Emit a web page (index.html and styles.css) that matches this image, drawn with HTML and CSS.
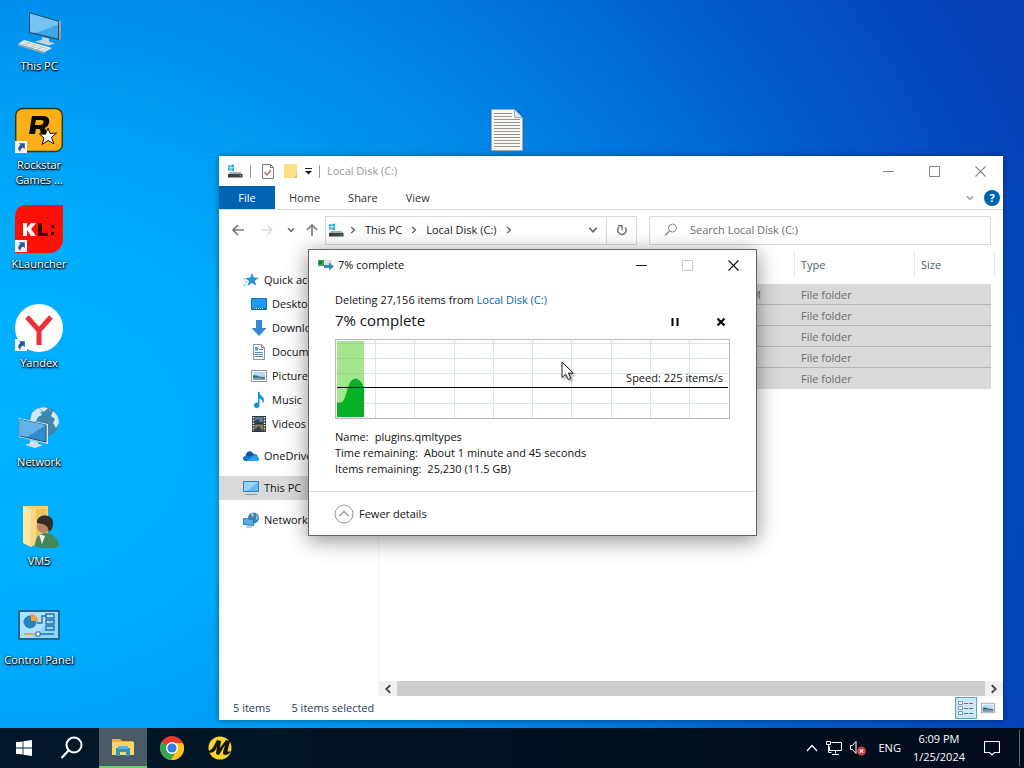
FILE: index.html
```html
<!DOCTYPE html>
<html lang="en">
<head>
  <meta charset="UTF-8" />
  <meta name="viewport" content="width=device-width, initial-scale=1" />
  <title>Local Disk (C:)</title>
  <link rel="stylesheet" href="styles.css">
</head>
<body>
  <!-- shared icons -->
  <svg class="sprite" aria-hidden="true">
    <symbol id="chevron" viewBox="0 0 8 8"><path d="M1 2.2 4 5.4 7 2.2" fill="none" stroke="currentColor" stroke-width="1.4"/></symbol>
    <symbol id="min" viewBox="0 0 11 11"><path d="M0 5.5h11" stroke="currentColor"/></symbol>
    <symbol id="max" viewBox="0 0 11 11"><path d="M.5.5h10v10H.5z" fill="none" stroke="currentColor"/></symbol>
    <symbol id="close" viewBox="0 0 11 11"><path d="M.5.5l10 10M10.5.5l-10 10" stroke="currentColor" stroke-width="1.1"/></symbol>
    <symbol id="disk" viewBox="0 0 16 14">
      <path d="M1 1.6 3.5 1v2.5H1zM4.3.9 7 .4v3.1H4.3zM1 4.3h2.5v2.4L1 6.2zM4.3 4.3H7v3.1l-2.7-.6z" fill="#1ba9e8"/>
      <path d="M3 8h10.5l2 2.500H1z" fill="#a9adb0"/>
      <path d="M1 10h14.500v3.500H1z" fill="#3c4246"/>
      <path d="M12.500 11.300h1.500v1h-1.500z" fill="#35e05f"/>
    </symbol>
    <symbol id="shortcut" viewBox="0 0 12 12">
      <path d="M0 0h12v12H0z" fill="#f3f6fa"/>
      <path d="M3.800 2.200h6v6L8 6.500C6 7.500 5.200 9 5.300 11 2.200 8.800 2.800 5.500 5.700 4.100z" fill="#2c5798"/>
    </symbol>
    <symbol id="picture" viewBox="0 0 16 12">
      <path d="M.5.5h15v11H.5z" fill="#fff" stroke="#8d9499"/>
      <path d="M2 2h12v8H2z" fill="#b5dcf4"/>
      <path d="M2 5.500c4-1 6 2 12 1.500V10H2z" fill="#3c6683"/>
      <path d="M2 8c5-1 8 0 12 .5V10H2z" fill="#79a1b1"/>
    </symbol>
  </svg>

  <main class="desktop">
    <nav class="shortcuts" aria-label="Desktop">
      <a href="#" class="shortcut">
        <svg viewBox="0 0 48 48">
          <path d="M14 5l30 9v19l-30-7z" fill="#33475a"/>
          <path d="M15 6.500l28 8.300v16.700l-28-6.500z" fill="#3fa6ea"/>
          <path d="M15 6.500l28 8.300v3L20 26l-5-1z" fill="#74c3f3"/>
          <path d="M44 14l2-.5v18.500l-2 1z" fill="#8fa2ae"/>
          <path d="M27 30l7 1.500v3l6 2-6 2-14-4 7-2z" fill="#c3d2db"/>
          <path d="M9 33l28 8-7 4L3 37z" fill="#eef3f5"/>
          <path d="M3 37l27 8v2L3 38.500z" fill="#9aaab4"/>
          <path d="M8 35l26 7M6 36.500l26 7M15 35l-6 3.500M21 37l-5 4M28 39l-6 4" stroke="#a8b6bf" stroke-width=".7"/>
        </svg>
        <span>This PC</span>
      </a>
      <a href="#" class="shortcut">
        <svg viewBox="0 0 48 48">
          <rect x=".7" y="2.500" width="46.600" height="43" rx="7" fill="#fcaf17" stroke="#2b3a15" stroke-width="1.400"/>
          <path d="M17 10h11c5 0 7 3 6 7-.7 3-2.500 4.500-5 5 2 .8 2.400 2 2 6h-5.500c0-4 .3-5-2.500-5h-2l-1.200 5H14zM21 14l-1.200 5H25c2 0 3-.8 3.400-2.500S28 14 26 14z" fill="#0c0a05"/>
          <path d="M33 22l2 5.500 6.500-.5-5 4.500 2.500 6.500-6-3.500-6 4 2-6.500-4.500-4 6 .2z" fill="#fff" stroke="#17130a"/>
          <use href="#shortcut" x="0" y="35" width="12" height="12"/>
        </svg>
        <span>Rockstar Games ...</span>
      </a>
      <a href="#" class="shortcut">
        <svg viewBox="0 0 48 48">
          <path d="M10 0h38v34c0 8-6 14-14 14H0V13C0 5 4 0 10 0z" fill="#ff1005"/>
          <path d="M8 18h4v5l4-5h5l-5 6 5 7h-5l-4-6v6H8z" fill="#fff"/>
          <path d="M23 18h4v10h6v3H23zM36 20h3v3h-3zM36 27h3v3h-3z" fill="#350706"/>
          <use href="#shortcut" x="0" y="35" width="12" height="12"/>
        </svg>
        <span>KLauncher</span>
      </a>
      <a href="#" class="shortcut">
        <svg viewBox="0 0 48 48">
          <circle cx="24" cy="24" r="24" fill="#fff"/>
          <path d="M12 13l12 13.500L36 13M24 26v15" fill="none" stroke="#ee3036" stroke-width="5"/>
          <use href="#shortcut" x="0" y="35" width="12" height="12"/>
        </svg>
        <span>Yandex</span>
      </a>
      <a href="#" class="shortcut">
        <svg viewBox="0 0 48 48">
          <circle cx="29" cy="19" r="15" fill="#3f86af"/>
          <path d="M17 10c4-5 10-7 16-5l-3 3-4 1 1 3-4 2-2 4-6 1c0-3 1-6 2-9zM38 8c4 3 6 7 6 12l-3 5-3-5 2-4-4-3z" fill="#cfe8f2"/>
          <path d="M24 5l3 3-2 3M34 6l2 3" stroke="#7db4cf" fill="none"/>
          <path d="M4 15l29 6v20L4 34z" fill="#d6e4ec"/>
          <path d="M5 16.500l26 5.500v17L5 33z" fill="#318bd0" stroke="#244e71"/>
          <path d="M5 16.500l26 5.500L12 34l-7-1.500z" fill="#63b3e8"/>
          <path d="M15 37l8 2v2l5 1-8 3-10-3 5-2z" fill="#d1dfe7"/>
        </svg>
        <span>Network</span>
      </a>
      <a href="#" class="shortcut">
        <svg viewBox="0 0 48 48">
          <path d="M8 4h25v37H8z" fill="#f4d271"/>
          <path d="M8 4l8 3v38l-8-4z" fill="#ffe9a1"/>
          <path d="M16 7h15v31l-15 7z" fill="#eac365"/>
          <path d="M16 7l-1 38 6-4V7z" fill="#f7d985"/>
          <path d="M20 44c0-10 5-13 11-13s12 5 13 13l-4 2H24z" fill="#46865c"/>
          <path d="M24 32l3 10 3-8z" fill="#eaf1ed"/>
          <circle cx="29" cy="24" r="7" fill="#b98460"/>
          <path d="M22 19c1-7 15-8 16 1 .5 5-2 9-4 10-1-6-3-8-12-9z" fill="#352e2b"/>
        </svg>
        <span>VM5</span>
      </a>
      <a href="#" class="shortcut">
        <svg viewBox="0 0 48 48">
          <path d="M3 9h42v30H3z" fill="#246794"/>
          <path d="M5 11h38v26H5z" fill="#8fd4fa"/>
          <path d="M5 11h38L17 37H5z" fill="#ade1fc"/>
          <circle cx="15" cy="21" r="6.500" fill="#2583bf"/>
          <path d="M16 20v-7c4 0 7 3 7 7z" fill="#f89e36"/>
          <path d="M22 22h5v-7h4M31 13h8v4h-8zM31 19h8v4h-8zM31 25h8v4h-8z" fill="none" stroke="#2373a5" stroke-width="1.400"/>
          <path d="M9 33h13" stroke="#d69844" stroke-width="1.500"/>
          <path d="M24 33h15" stroke="#2373a5" stroke-width="1.500"/>
          <path d="M21 31h4v4h-4z" fill="#fff" stroke="#2373a5"/>
        </svg>
        <span>Control Panel</span>
      </a>
    </nav>

    <svg class="text-file" viewBox="0 0 32 42" aria-label="Text document">
      <path d="M.5.500h23l8 8v33H.500z" fill="#f7f7f5" stroke="#a6a8a7"/>
      <path d="M23.500.500v8h8z" fill="#dfe4e8" stroke="#a6a8a7"/>
      <path d="M3 4.500h18M3 7.500h18M3 10.500h26M3 13.500h26M3 16.500h26M3 19.500h26M3 22.500h26M3 25.500h26M3 28.500h26M3 31.500h26M3 34.500h26M3 37.500h26" stroke="#9a928c"/>
    </svg>

    <section class="explorer" aria-label="Local Disk (C:)">
      <header class="titlebar">
        <svg class="disk" viewBox="0 0 16 14"><use href="#disk"/></svg>
        <i class="sep"></i>
        <svg class="props" viewBox="0 0 12 15">
          <path d="M.5.500h8l3 3v11H.500z" fill="#fff" stroke="#7a7a7a"/>
          <path d="M8.500.500v3h3" fill="none" stroke="#7a7a7a"/>
          <path d="M2.500 8l2.500 3 4-5" fill="none" stroke="#b4694c" stroke-width="1.400"/>
        </svg>
        <svg class="newfolder" viewBox="0 0 13 16">
          <path d="M0 1h13v14H0z" fill="#fbdf86"/><path d="M10 15l3-4v4z" fill="#e5bd53"/>
        </svg>
        <svg class="menu-arrow" viewBox="0 0 7 7"><path d="M0 .5h7" stroke="#222"/><path d="M0 3h7L3.500 6.500z" fill="#111"/></svg>
        <i class="sep"></i>
        <h1>Local Disk (C:)</h1>
        <div class="window-buttons">
          <button type="button" aria-label="Minimize"><svg><use href="#min"/></svg></button>
          <button type="button" aria-label="Maximize"><svg><use href="#max"/></svg></button>
          <button type="button" aria-label="Close"><svg><use href="#close"/></svg></button>
        </div>
      </header>

      <div class="ribbon">
        <button type="button" class="file-tab">File</button>
        <button type="button">Home</button>
        <button type="button">Share</button>
        <button type="button">View</button>
        <button type="button" class="expand" aria-label="Expand the ribbon"><svg><use href="#chevron"/></svg></button>
        <button type="button" class="help" aria-label="Help">?</button>
      </div>

      <div class="toolbar">
        <div class="arrows">
          <button type="button" aria-label="Back"><svg viewBox="0 0 12 12"><path d="M12 6H1M6 1 1 6l5 5" fill="none" stroke="#777" stroke-width="1.600"/></svg></button>
          <button type="button" aria-label="Forward"><svg viewBox="0 0 12 12"><path d="M0 6h11M6 1l5 5-5 5" fill="none" stroke="#ddd" stroke-width="1.400"/></svg></button>
          <button type="button" class="recent" aria-label="Recent locations"><svg><use href="#chevron"/></svg></button>
          <button type="button" class="up" aria-label="Up"><svg viewBox="0 0 12 12"><path d="M6 12V1M1 6l5-5 5 5" fill="none" stroke="#777" stroke-width="1.600"/></svg></button>
        </div>
        <div class="address">
          <svg class="disk" viewBox="0 0 16 14"><use href="#disk"/></svg>
          <svg class="crumb"><use href="#chevron"/></svg>
          <a href="#">This PC</a>
          <svg class="crumb"><use href="#chevron"/></svg>
          <a href="#">Local Disk (C:)</a>
          <svg class="crumb"><use href="#chevron"/></svg>
          <button type="button" class="history" aria-label="Previous locations"><svg><use href="#chevron"/></svg></button>
          <button type="button" class="refresh" aria-label="Refresh">
            <svg viewBox="0 0 12 12"><path d="M3 3.200A4.200 4.200 0 1 0 9.200 3.500" fill="none" stroke="#777" stroke-width="1.600"/><path d="M2 1.700h4V6" fill="none" stroke="#777" stroke-width="1.500"/></svg>
          </button>
        </div>
        <label class="search">
          <svg viewBox="0 0 14 14"><circle cx="8.500" cy="5" r="4" fill="none" stroke="#888"/><path d="M5.500 8 1 12.500" stroke="#888" stroke-width="1.200"/></svg>
          <input type="text" placeholder="Search Local Disk (C:)" aria-label="Search Local Disk (C:)" />
        </label>
      </div>

      <div class="content">
        <nav class="tree" aria-label="Folders">
          <a href="#">
            <svg viewBox="0 0 16 16"><path d="M9 1l1.800 4.500 5 .3-4 3 1.500 5L9 11l-4.500 3 1.500-5-4-3 5.200-.3z" fill="#2a92d8"/><path d="M0 7h3M1 10h3M0 13h3" stroke="#7bc0e8"/></svg>
            Quick access
          </a>
          <a href="#" class="sub">
            <svg viewBox="0 0 16 16"><path d="M.5 2.500h15v11H.500z" fill="#1b9bf0" stroke="#1576bd"/><path d="M1 12h14v1.500H1z" fill="#125b96"/><path d="M3 12.500h9" stroke="#d1ecff" stroke-dasharray="1 1"/></svg>
            Desktop
          </a>
          <a href="#" class="sub">
            <svg viewBox="0 0 16 16"><path d="M5 0h6v8h4.500L8 16 .5 8H5z" fill="#3987d3"/></svg>
            Downloads
          </a>
          <a href="#" class="sub">
            <svg viewBox="0 0 16 16"><path d="M2.500.500h8l3 3v12h-11z" fill="#fff" stroke="#8b9298"/><path d="M10.500.500v3h3" fill="none" stroke="#8b9298"/><path d="M4 8.500h8M4 10.500h8M4 12.500h8M8 5.500h4" stroke="#4e88b6"/><path d="M4 3h3v3.500H4z" fill="#4e9bd2"/></svg>
            Documents
          </a>
          <a href="#" class="sub">
            <svg viewBox="0 0 16 16"><use href="#picture" y="2" width="16" height="12"/></svg>
            Pictures
          </a>
          <a href="#" class="sub">
            <svg viewBox="0 0 16 16"><path d="M7 0h1.500c0 4 4.500 4 4.500 8 0 1.500-.5 2.500-1.500 3.500.5-3-1-4.500-3-5V13c0 4-5.500 4-5.500.5C3 11 5 10 7 10.500z" fill="#1394e0"/></svg>
            Music
          </a>
          <a href="#" class="sub">
            <svg viewBox="0 0 16 16"><path d="M1 0h14v16H1z" fill="#343434"/><path d="M4 1h8v6H4z" fill="#517caa"/><path d="M4 8.500h8v6.500H4z" fill="#8f7a54"/><path d="M4 5l3-2 2 3h3v1H4zM4 13l4-3 4 5H4z" fill="#29455c"/><path d="M2.500 1v14M13.500 1v14" stroke="#eee" stroke-width="1.500" stroke-dasharray="1.500 1.200"/></svg>
            Videos
          </a>
          <a href="#" class="root">
            <svg viewBox="0 0 16 16"><path d="M2 13c-3-1-2.500-5 .5-5C3 3 8 2 10.500 6 14 5.500 15 8 14.500 9 17 10 16 13 14 13z" fill="#1276ca"/><path d="M3 13l7-5c2-1.500 4-.5 4.500 1 2.500 1 1.500 4-.5 4z" fill="#2b9dea"/><path d="M3 7.500c.5-5 6-5 7.500-1.500L8 8z" fill="#07559f"/></svg>
            OneDrive
          </a>
          <a href="#" class="root selected">
            <svg viewBox="0 0 16 16"><path d="M.5 1.500h15v10H.500z" fill="#5fbdf5" stroke="#337fae"/><path d="M1 2h14L4 11H1z" fill="#93d5fa"/><path d="M2 14.500h12" stroke="#8699a6"/></svg>
            This PC
          </a>
          <a href="#" class="root">
            <svg viewBox="0 0 16 16"><circle cx="10.500" cy="6" r="5.500" fill="#3d83b1"/><path d="M8 2l2-1 1 2-2 2zM13.500 2l1.500 4-2 2z" fill="#a4d0e4"/><path d="M.5 6.500l10 1v6l-10-1z" fill="#53adea" stroke="#2a78ac"/><path d="M3 15h6" stroke="#7d98a8"/></svg>
            Network
          </a>
        </nav>

        <div class="files">
          <table>
            <colgroup><col><col class="c-date"><col class="c-type"><col class="c-size"></colgroup>
            <thead>
              <tr><th></th><th></th><th><span>Type</span></th><th><span>Size</span></th></tr>
            </thead>
            <tbody>
              <tr><td></td><td class="date">PM</td><td>File folder</td><td></td></tr>
              <tr><td></td><td></td><td>File folder</td><td></td></tr>
              <tr><td></td><td></td><td>File folder</td><td></td></tr>
              <tr><td></td><td></td><td>File folder</td><td></td></tr>
              <tr><td></td><td></td><td>File folder</td><td></td></tr>
            </tbody>
          </table>
          <div class="scrollbar">
            <button type="button" class="left" aria-label="Scroll left"><svg><use href="#chevron"/></svg></button>
            <div class="thumb"></div>
            <button type="button" class="right" aria-label="Scroll right"><svg><use href="#chevron"/></svg></button>
          </div>
        </div>
      </div>

      <footer class="status">
        <span>5 items</span>
        <span>5 items selected</span>
        <button type="button" class="view active" aria-label="Details view">
          <svg viewBox="0 0 16 14"><path d="M.5.500h4v3h-4zM.5 5.500h4v3h-4zM.5 10.500h4v3h-4z" fill="#fff" stroke="#7e99aa"/><path d="M6 2.500h10M6 7.500h10M6 12.500h10" stroke="#5f7382" stroke-dasharray="4 1"/></svg>
        </button>
        <button type="button" class="view" aria-label="Large icons view"><svg viewBox="0 0 14 11"><use href="#picture" width="14" height="11"/></svg></button>
      </footer>
    </section>

    <section class="dialog" role="dialog" aria-label="7% complete">
      <header class="titlebar">
        <svg class="copy-icon" viewBox="0 0 16 12"><path d="M0 1h14v6H0z" fill="#d4e6d8"/><path d="M0 1h6v6H0z" fill="#3aa655"/><path d="M1 2h3v3H1z" fill="#137a2d"/><path d="M6 6h5V3.500l5 4-5 4V9H6z" fill="#3c83c7"/></svg>
        <h2>7% complete</h2>
        <div class="window-buttons">
          <button type="button" aria-label="Minimize"><svg><use href="#min"/></svg></button>
          <button type="button" aria-label="Maximize" disabled><svg><use href="#max"/></svg></button>
          <button type="button" aria-label="Close"><svg><use href="#close"/></svg></button>
        </div>
      </header>
      <div class="dialog-body">
        <p>Deleting 27,156 items from <a href="#">Local Disk (C:)</a></p>
        <div class="progress-row">
          <h3>7% complete</h3>
          <button type="button" aria-label="Pause"><svg viewBox="0 0 10 10"><path d="M2.500 1v8M7.500 1v8" stroke="#000" stroke-width="2"/></svg></button>
          <button type="button" aria-label="Cancel"><svg viewBox="0 0 10 10"><path d="M1.500 1.500l7 7M8.500 1.500l-7 7" stroke="#000" stroke-width="2.200"/></svg></button>
        </div>
        <div class="graph">
          <svg viewBox="0 0 393 78" preserveAspectRatio="none">
            <path d="M0 3.500h393M0 18.500h393M0 33.500h393M0 63.500h393M39.500 0v78M78.500 0v78M118.500 0v78M157.500 0v78M196.500 0v78M235.500 0v78M275.500 0v78M314.500 0v78M353.500 0v78" stroke="#d5e8db"/>
            <path d="M1 1h27v76H1z" fill="#a4e68d"/>
            <path d="M1 3.500h27M1 18.500h27M1 33.500h27" stroke="#95da82"/>
            <path d="M1 62.500h4c5-1 6-17 10-21.500 3-3.500 6-3.500 9 0 2 2 3 4 4 6v30H1z" fill="#06b025"/>
            <path d="M1 47.500h391" stroke="#000"/>
          </svg>
          <span>Speed: 225 items/s</span>
        </div>
        <dl>
          <div><dt>Name:</dt><dd>plugins.qmltypes</dd></div>
          <div><dt>Time remaining:</dt><dd>About 1 minute and 45 seconds</dd></div>
          <div><dt>Items remaining:</dt><dd>25,230 (11.5 GB)</dd></div>
        </dl>
      </div>
      <footer>
        <button type="button" class="details">
          <svg viewBox="0 0 20 20"><circle cx="10" cy="10" r="9" fill="none" stroke="#999"/><path d="M5.500 12 10 7.500l4.500 4.500" fill="none" stroke="#999" stroke-width="1.400"/></svg>
          Fewer details
        </button>
      </footer>
    </section>

    <svg class="cursor" viewBox="0 0 13 20" aria-hidden="true"><path d="M1 1v15.500l3.700-3.400 2.500 5.400 2.600-1.200-2.500-5.200h4.900z" fill="#fff" stroke="#222"/></svg>
  </main>

  <footer class="taskbar">
    <button type="button" aria-label="Start"><svg class="i16" viewBox="0 0 16 16"><path d="M0 2.300 6.600 1.400v6.200H0zM7.400 1.300 16 0v7.600H7.400zM0 8.400h6.600v6.200L0 13.700zM7.400 8.400H16V16l-8.600-1.300z" fill="#fff"/></svg></button>
    <button type="button" aria-label="Search"><svg class="i24" viewBox="0 0 24 24"><circle cx="14" cy="9" r="7.500" fill="none" stroke="#fff" stroke-width="2"/><path d="M8.500 14.500 1.500 22" stroke="#fff" stroke-width="2.200"/></svg></button>
    <button type="button" class="running" aria-label="File Explorer">
      <svg class="i24" viewBox="0 0 24 24"><path d="M1 4h8l2 2h11v14H1z" fill="#e9b13c"/><path d="M1 7h22v13H1z" fill="#ffd767"/><path d="M5 13h14v8h-4v-4H9v4H5z" fill="#338fcb"/><path d="M7 11h10v3H7z" fill="#55b4e6"/></svg>
    </button>
    <button type="button" aria-label="Chrome">
      <svg class="i24" viewBox="0 0 24 24"><circle cx="12" cy="12" r="12" fill="#e8392c"/><path d="M1.600 6 8 17l2 6.800C3 23-2 14 1.600 6z" fill="#35a853"/><path d="M1.600 6a12 12 0 0 0 9.200 18L16 15z" fill="#35a853"/><path d="M12 7h10.900A12 12 0 0 1 10.800 24L17 14z" fill="#fbc31b"/><circle cx="12" cy="12" r="6" fill="#fff"/><circle cx="12" cy="12" r="4.600" fill="#347fe0"/></svg>
    </button>
    <button type="button" aria-label="Player">
      <svg class="i24" viewBox="0 0 24 24"><circle cx="12" cy="12" r="11.500" fill="#f8d531"/><path d="M0 15c1 3 6 2 8-2l1-3-1 8 3 1 6-10-2 7c-1 4 5 4 8-1-3 1-4 1-3-2l2-8-4-1-6 8 1-7-4-1C6 9 5 14 0 15z" fill="#15140b"/></svg>
    </button>
    <div class="tray">
      <button type="button" aria-label="Show hidden icons"><svg class="i12" viewBox="0 0 12 12"><path d="M1 9l5-5.500L11 9" fill="none" stroke="#fff" stroke-width="1.200"/></svg></button>
      <button type="button" aria-label="Network"><svg class="i16" viewBox="0 0 16 16"><path d="M5.500 2.500h10v8h-12v-4M9.500 10.500v3M6 14.500h7M.5 1.500h4v3h-4zM2.500 4.500v8h3" fill="none" stroke="#fff"/></svg></button>
      <button type="button" aria-label="Volume muted"><svg class="i16" viewBox="0 0 16 16"><path d="M.5 5.500h2l3.500-4v12l-3.500-4h-2z" fill="none" stroke="#fff"/><circle cx="11.500" cy="11" r="4.500" fill="#d33a43"/><path d="M9.800 9.300l3.400 3.400M13.200 9.300l-3.400 3.400" stroke="#fff" stroke-width="1.200"/></svg></button>
      <button type="button" class="lang">ENG</button>
      <button type="button" class="clock"><span>6:09 PM</span><span>1/25/2024</span></button>
      <button type="button" class="notify" aria-label="Notifications"><svg class="i16" viewBox="0 0 16 16"><path d="M.5 1.500h15v11h-5L8 15l-2.500-2.500h-5z" fill="none" stroke="#fff" stroke-width="1.200"/></svg></button>
      <i class="show-desktop"></i>
    </div>
  </footer>
</body>
</html>
```
FILE: styles.css
```css
* {
  box-sizing: border-box;
}
body {
  margin: 0;
  height: 100vh;
  display: flex;
  flex-direction: column;
  overflow: hidden;
  font-family: "Open Sans", "Noto Sans", sans-serif;
  font-size: 11px;
  line-height: 16px;
  color: #111;
}
h1, h2, h3, p, dl, dd {
  margin: 0;
  font-size: inherit;
  font-weight: 400;
}
button {
  display: flex;
  align-items: center;
  justify-content: center;
  padding: 0;
  border: none;
  background: none;
  font: inherit;
  color: inherit;
}
a {
  color: inherit;
  text-decoration: none;
}
svg {
  flex: none;
  display: block;
}
.sprite {
  position: absolute;
  width: 0;
  height: 0;
}

/* Desktop */
.desktop {
  position: relative;
  flex: 1;
  min-height: 0;
  background: radial-gradient(ellipse 1100px 900px at 0 60%, #00b2ff 0%, #00adfd 22%, #0098f2 42%, #007ae0 62%, #0454ca 84%, #0440b4 100%);
}
.shortcuts {
  display: flex;
  flex-direction: column;
  width: 78px;
  padding-top: 7px;
}
.shortcut {
  display: flex;
  flex-direction: column;
  align-items: center;
  gap: 3px;
  height: 99px;
  color: #fff;
  text-align: center;
  line-height: 15px;
  text-shadow: 0 1px 1px #000, 1px 1px 2px #000, 0 0 3px rgba(0, 0, 0, 0.6);
}
.shortcut svg {
  width: 48px;
  height: 48px;
}
.text-file {
  position: absolute;
  left: 491px;
  top: 109px;
  width: 32px;
  height: 42px;
}
.cursor {
  position: absolute;
  left: 561px;
  top: 361px;
  width: 13px;
  height: 20px;
  filter: drop-shadow(2px 2px 1px rgba(0, 0, 0, 0.3));
}

/* Windows */
.titlebar {
  display: flex;
  align-items: center;
  height: 30px;
}
.window-buttons {
  display: flex;
  align-self: stretch;
  margin-left: auto;
}
.window-buttons button {
  width: 46px;
}
.window-buttons svg {
  width: 11px;
  height: 11px;
}
.explorer {
  position: absolute;
  left: 219px;
  top: 156px;
  right: 21px;
  bottom: 8px;
  display: flex;
  flex-direction: column;
  background: #fff;
  box-shadow: 0 0 6px rgba(0, 0, 0, 0.4);
}
.explorer .titlebar {
  padding-left: 8px;
  color: #999;
}
.explorer .window-buttons {
  color: #888;
}
.disk {
  width: 16px;
  height: 14px;
}
.sep {
  width: 1px;
  height: 13px;
  margin: 0 7px;
  background: #999;
}
.props {
  width: 12px;
  height: 15px;
  margin: 0 10px 0 4px;
}
.newfolder {
  width: 13px;
  height: 16px;
}
.menu-arrow {
  width: 7px;
  height: 7px;
  margin-left: 8px;
}

/* Ribbon */
.ribbon {
  display: flex;
  height: 24px;
  border-bottom: 1px solid #dadbdc;
  color: #333;
}
.ribbon button {
  padding: 0 14px;
}
.ribbon .file-tab {
  width: 56px;
  background: #0063b1;
  color: #fff;
}
.ribbon svg, .crumb {
  width: 8px;
  height: 8px;
}
.ribbon .expand {
  margin-left: auto;
  padding: 0 10px;
  color: #999;
}
.ribbon .help {
  align-self: center;
  width: 16px;
  height: 16px;
  margin-right: 3px;
  padding: 0;
  border-radius: 50%;
  background: #0063b1;
  color: #fff;
  font-weight: 700;
}

/* Address bar */
.toolbar {
  display: grid;
  grid-template-columns: 106px 312fr 12px 342fr;
  align-items: center;
  height: 40px;
  padding-right: 12px;
  color: #666;
}
.arrows {
  display: flex;
  align-items: center;
  padding-left: 13px;
  gap: 17px;
}
.arrows svg {
  width: 12px;
  height: 12px;
}
.arrows .recent svg {
  width: 8px;
  height: 8px;
}
.arrows .up {
  margin-left: -6px;
}
.arrows .recent {
  margin-left: -3px;
}
.address, .search {
  display: flex;
  align-items: center;
  height: 29px;
  min-width: 0;
  border: 1px solid #d9d9d9;
}
.address {
  gap: 8px;
  padding-left: 2px;
  color: #222;
  white-space: nowrap;
}
.crumb {
  color: #666;
  transform: rotate(-90deg);
}
.address .disk {
  margin-right: -3px;
}
.history {
  margin-left: auto;
  color: #666;
}
.history svg {
  width: 10px;
  height: 10px;
}
.refresh {
  align-self: stretch;
  width: 30px;
  border-left: 1px solid #d9d9d9;
}
.refresh svg {
  width: 12px;
  height: 12px;
}
.search {
  grid-column: 4;
  padding-left: 14px;
  gap: 12px;
}
.search svg {
  width: 14px;
  height: 14px;
}
.search input {
  flex: 1;
  min-width: 0;
  padding: 0;
  border: none;
  outline: none;
  background: none;
  font: inherit;
}
.search input::placeholder {
  color: #6d6d6d;
}

/* Folder tree and file list */
.content {
  flex: 1;
  display: flex;
  min-height: 0;
}
.tree {
  width: 160px;
  padding-top: 18px;
  border-right: 1px solid #f5f5f5;
}
.tree a {
  display: flex;
  align-items: center;
  gap: 5px;
  height: 24px;
  padding-left: 24px;
  white-space: nowrap;
  overflow: hidden;
}
.tree .sub {
  padding-left: 32px;
}
.tree .root {
  margin-bottom: 8px;
}
.tree .sub + .root {
  margin-top: 8px;
}
.tree .selected {
  background: #d9d9d9;
}
.tree svg {
  width: 16px;
  height: 16px;
}
.files {
  flex: 1;
  display: flex;
  flex-direction: column;
  justify-content: space-between;
}
table {
  table-layout: fixed;
  width: calc(100% - 8px);
  border-collapse: separate;
  border-spacing: 0;
  color: #6d6d6d;
}
.c-date {
  width: 150px;
}
.c-type {
  width: 120px;
}
.c-size {
  width: 81px;
}
th {
  height: 33px;
  padding: 2px 0 6px;
  font-weight: 400;
  text-align: left;
  color: #4c607a;
}
th span {
  display: block;
  padding: 5px 6px;
  border-left: 1px solid #e5e5e5;
}
th:last-child span {
  border-right: 1px solid #e5e5e5;
}
td {
  height: 21px;
  padding: 0 7px;
  background: linear-gradient(#b5b5b5, #b5b5b5) bottom / 100% 1px no-repeat #d9d9d9;
}
td:last-child {
  border-right: 4px solid #fff;
}
tr:last-child td {
  background: #d9d9d9;
}
.date {
  padding-right: 33px;
  text-align: right;
}
.scrollbar {
  display: flex;
  height: 15px;
  background: #f0f0f0;
  color: #444;
}
.scrollbar button {
  width: 18px;
}
.scrollbar svg {
  width: 10px;
  height: 10px;
}
.scrollbar .left svg {
  transform: rotate(90deg);
}
.scrollbar .right svg {
  transform: rotate(-90deg);
}
.thumb {
  flex: 1;
  background: #cdcdcd;
}
.status {
  display: flex;
  align-items: center;
  gap: 21px;
  height: 24px;
  padding: 0 4px 0 14px;
  color: #1e395b;
}
.view {
  width: 22px;
  height: 22px;
}
.view.active {
  margin: 0 -21px 0 auto;
  border: 1px solid #4fa6d5;
  background: #cce8f6;
}
.view svg {
  width: 14px;
  height: 12px;
}
.view.active svg {
  width: 16px;
  height: 14px;
}

/* Progress dialog */
.dialog {
  position: absolute;
  left: 308px;
  top: 249px;
  width: 449px;
  background: #fff;
  border: 1px solid #666;
  box-shadow: 0 4px 20px rgba(0, 0, 0, 0.45);
}
.dialog .titlebar {
  padding-left: 9px;
  gap: 4px;
}
.copy-icon {
  width: 16px;
  height: 12px;
}
.dialog button:disabled {
  color: #c8c8c8;
}
.dialog-body {
  padding: 12px 26px 14px;
}
.dialog-body a {
  color: #0066b4;
}
.progress-row {
  display: flex;
  align-items: center;
  height: 31px;
  padding-bottom: 4px;
}
.progress-row h3 {
  margin-right: auto;
  padding-bottom: 3px;
  font-size: 15px;
  line-height: 20px;
}
.progress-row button {
  width: 18px;
  height: 18px;
  margin-left: 28px;
}
.progress-row svg {
  width: 10px;
  height: 10px;
}
.graph {
  position: relative;
  height: 80px;
  border: 1px solid #b8b8b8;
}
.graph svg {
  width: 100%;
  height: 100%;
}
.graph span {
  position: absolute;
  right: 6px;
  top: 30px;
}
dl {
  padding-top: 10px;
}
dl div {
  display: flex;
  gap: 6px;
}
.dialog footer {
  display: flex;
  align-items: center;
  height: 44px;
  padding-left: 25px;
  border-top: 1px solid #dfdfdf;
}
.details {
  gap: 5px;
}
.details svg {
  width: 20px;
  height: 20px;
}

/* Taskbar */
.taskbar {
  display: flex;
  height: 40px;
  background: linear-gradient(90deg, #02182a, #02101f 60%, #020b1c);
  color: #fff;
}
.taskbar > button {
  width: 48px;
}
.taskbar .running {
  margin-left: 3px;
  margin-right: 1px;
  border-bottom: 2px solid #5fd35a;
  background: #4a5b66;
}
.i12 {
  width: 12px;
  height: 12px;
}
.i16 {
  width: 16px;
  height: 16px;
}
.i24 {
  width: 24px;
  height: 24px;
}
.tray {
  display: flex;
  align-items: stretch;
  gap: 8px;
  margin-left: auto;
}
.lang {
  margin: 0 4px;
}
.clock {
  flex-direction: column;
  line-height: 18px;
}
.notify {
  width: 38px;
}
.show-desktop {
  width: 5px;
  margin: 2px 0;
  border-left: 1px solid #5b6470;
}
```
